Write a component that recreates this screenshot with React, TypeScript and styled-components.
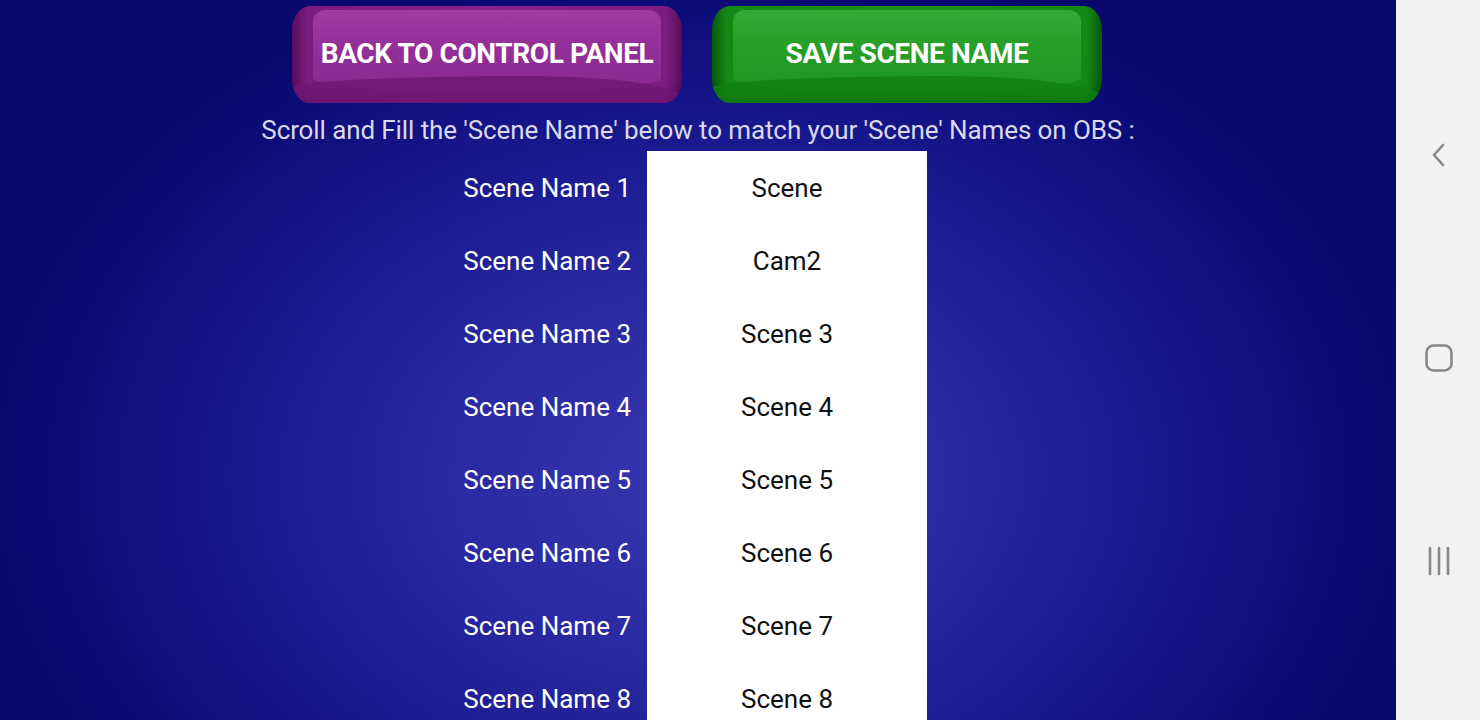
import React from "react";
import styled, { createGlobalStyle } from "styled-components";

const Global = createGlobalStyle`
  html, body { margin: 0; padding: 0; height: 720px; overflow: hidden; }
  body { font-family: Roboto, "Liberation Sans", sans-serif; }
`;

const Screen = styled.div`
  display: flex;
  width: 1480px;
  height: 720px;
  overflow: hidden;
`;

const Main = styled.main`
  flex: 1;
  display: flex;
  flex-direction: column;
  align-items: stretch;
  padding-top: 6px;
  background: radial-gradient(ellipse 780px 580px at 50% 66%, #3636ae 0%, #2a2aa2 30%, #17178c 62%, #0a0a74 85%, #07076a 100%);
  overflow: hidden;
`;

const ButtonRow = styled.div`
  display: flex;
  justify-content: center;
  gap: 30px;
  padding-right: 2px;
`;

const GlossyButton = styled.button<{ $tone: "purple" | "green" }>`
  position: relative;
  width: 390px;
  height: 97px;
  border: none;
  border-radius: 18px / 24px;
  padding: 0;
  cursor: pointer;
  font-family: Roboto, "Liberation Sans", sans-serif;
  font-weight: 700;
  font-size: 28px;
  color: #ffffff;
  letter-spacing: -0.4px;
  background: ${(p) =>
    p.$tone === "purple"
      ? "linear-gradient(90deg, #5a0e5e 0%, #7c1b80 4%, #86228a 50%, #7c1b80 96%, #5a0e5e 100%)"
      : "linear-gradient(90deg, #0a5a0a 0%, #138a13 4%, #179417 50%, #138a13 96%, #0a5a0a 100%)"};
  box-shadow: inset 0 -10px 8px -4px
    ${(p) => (p.$tone === "purple" ? "rgba(60,5,70,0.55)" : "rgba(5,60,5,0.55)")};
  overflow: hidden;

  &::before {
    content: "";
    position: absolute;
    left: 21px;
    right: 21px;
    top: 4px;
    height: 82px;
    border-radius: 12px 12px 50% 50% / 12px 12px 14px 14px;
    background: ${(p) =>
      p.$tone === "purple"
        ? "linear-gradient(180deg, #a23aa2 0%, #95309a 40%, #8a288f 100%)"
        : "linear-gradient(180deg, #35aa35 0%, #28a028 40%, #1f951f 100%)"};
  }

  &::after {
    content: "";
    position: absolute;
    left: 0;
    right: 0;
    top: 70px;
    height: 40px;
    background: ${(p) => (p.$tone === "purple" ? "#711773" : "#128012")};
    border-radius: 60% 40% 0 0 / 12px 22px 0 0;
    opacity: 0.8;
  }
`;

const ButtonLabel = styled.span`
  position: relative;
  z-index: 1;
  display: block;
  margin-top: -2px;
`;

const Instruction = styled.p`
  margin: 13px 0 0;
  text-align: center;
  font-size: 26px;
  line-height: 28px;
  color: #d9d9ea;
  letter-spacing: -0.1px;
`;

const Table = styled.div`
  display: grid;
  grid-template-columns: 647px 280px;
  margin-top: 7px;
`;

const Label = styled.div`
  height: 73px;
  display: flex;
  align-items: center;
  justify-content: flex-end;
  padding-right: 16px;
  box-sizing: border-box;
  font-size: 26px;
  color: #ffffff;
`;

const Field = styled.div`
  height: 73px;
  display: flex;
  align-items: center;
  justify-content: center;
  box-sizing: border-box;
  background: #ffffff;
  font-size: 26px;
  color: #111111;
`;

const NavBar = styled.nav`
  width: 84px;
  background: #f2f2f2;
  display: flex;
  flex-direction: column;
  align-items: center;
  justify-content: space-between;
  padding: 138px 0 142px 2px;
  box-sizing: border-box;
`;

const NavIcon = styled.svg`
  width: 34px;
  height: 34px;
  color: #878787;
`;

const values = ["Scene", "Cam2", "Scene 3", "Scene 4", "Scene 5", "Scene 6", "Scene 7", "Scene 8", "Scene 9"];

export default function App() {
  return (
    <>
      <Global />
      <Screen>
        <Main>
          <ButtonRow>
            <GlossyButton $tone="purple">
              <ButtonLabel>BACK TO CONTROL PANEL</ButtonLabel>
            </GlossyButton>
            <GlossyButton $tone="green">
              <ButtonLabel>SAVE SCENE NAME</ButtonLabel>
            </GlossyButton>
          </ButtonRow>
          <Instruction>
            Scroll and Fill the 'Scene Name' below to match your 'Scene' Names on OBS :
          </Instruction>
          <Table>
            {values.map((v, i) => (
              <React.Fragment key={i}>
                <Label>Scene Name {i + 1}</Label>
                <Field>{v}</Field>
              </React.Fragment>
            ))}
          </Table>
        </Main>
        <NavBar>
          <NavIcon viewBox="0 0 34 34" fill="none" stroke="currentColor" strokeWidth="2.6" strokeLinecap="round" strokeLinejoin="round">
            <path d="M21 7 L12 17 L21 27" />
          </NavIcon>
          <NavIcon viewBox="0 0 34 34" fill="none" stroke="currentColor" strokeWidth="2.6">
            <rect x="4.5" y="4.5" width="25" height="25" rx="7" />
          </NavIcon>
          <NavIcon viewBox="0 0 34 34" fill="none" stroke="currentColor" strokeWidth="2.6" strokeLinecap="round">
            <path d="M8 4 V30 M17 4 V30 M26 4 V30" />
          </NavIcon>
        </NavBar>
      </Screen>
    </>
  );
}
